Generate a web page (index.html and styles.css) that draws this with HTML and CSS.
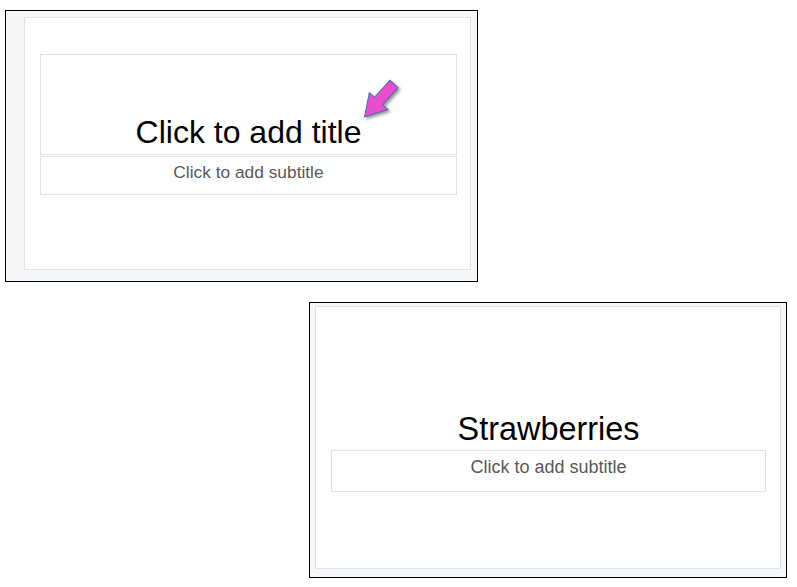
FILE: index.html
```html
<!DOCTYPE html>
<html>
<head>
<meta charset="utf-8">
<link rel="stylesheet" href="styles.css">
</head>
<body>
<div class="canvas">
  <div class="window w1">
    <div class="slide s1">
      <div class="ph title-ph"><span>Click to add title</span></div>
      <div class="ph sub-ph">Click to add subtitle</div>
    </div>
    <svg class="arrow" width="70" height="60" viewBox="350 70 70 60" xmlns="http://www.w3.org/2000/svg">
      <path d="M0,-5.5 L23,-5.5 L23,-12.5 L44,0 L23,12.5 L23,5.5 L0,5.5 Z" transform="translate(394 84) rotate(132)" fill="#e84ccf" stroke="#4a6ea6" stroke-width="1" stroke-linejoin="miter"/>
    </svg>
  </div>
  <div class="window w2">
    <div class="slide s2">
      <div class="title2"><span>Strawberries</span></div>
      <div class="ph sub2">Click to add subtitle</div>
    </div>
  </div>
</div>
</body>
</html>
```
FILE: styles.css
```css
html, body {
  margin: 0;
  padding: 0;
  background: #ffffff;
}

body {
  font-family: "Liberation Sans", Arial, sans-serif;
  color: #000;
}

.canvas {
  display: flex;
  flex-direction: column;
  align-items: flex-start;
}

.window {
  box-sizing: border-box;
  border: 1px solid #000;
  background: #f6f7f9;
  position: relative;
}

.slide {
  box-sizing: border-box;
  border: 1px solid #e3e4e6;
  background: #ffffff;
}

.ph {
  box-sizing: border-box;
  border: 1px solid #e2e2e2;
}

/* first window */
.w1 {
  margin: 10px 0 0 5px;
  width: 473px;
  height: 272px;
  padding: 6px 6px 11px 18px;
}

.s1 {
  width: 447px;
  height: 253px;
  padding: 36px 13px 0 15px;
  display: flex;
  flex-direction: column;
  gap: 1px;
}

.title-ph {
  height: 101px;
  display: flex;
  align-items: flex-end;
  justify-content: center;
  font-size: 32px;
  line-height: 36px;
  padding-bottom: 4px;
  color: #000;
}

.sub-ph {
  height: 39px;
  text-align: center;
  font-size: 17.33px;
  line-height: 20px;
  padding-top: 5px;
  color: #595959;
}

.arrow {
  position: absolute;
  left: 344px;
  top: 59px;
  overflow: visible;
  filter: drop-shadow(2px 2px 1.5px rgba(0, 0, 0, 0.4));
}

/* second window */
.w2 {
  margin: 20px 0 0 309px;
  width: 478px;
  height: 276px;
  padding: 3px 5px 8px 5px;
}

.s2 {
  width: 466px;
  height: 263px;
  padding: 0 14px 0 15px;
  display: flex;
  flex-direction: column;
}

.title2 {
  height: 143px;
  display: flex;
  align-items: flex-end;
  justify-content: center;
  font-size: 32.4px;
  line-height: 36px;
  padding-bottom: 3px;
  box-sizing: border-box;
  color: #000;
}

.sub2 {
  height: 42px;
  text-align: center;
  font-size: 18px;
  line-height: 21px;
  padding-top: 6px;
  color: #595959;
}
```
